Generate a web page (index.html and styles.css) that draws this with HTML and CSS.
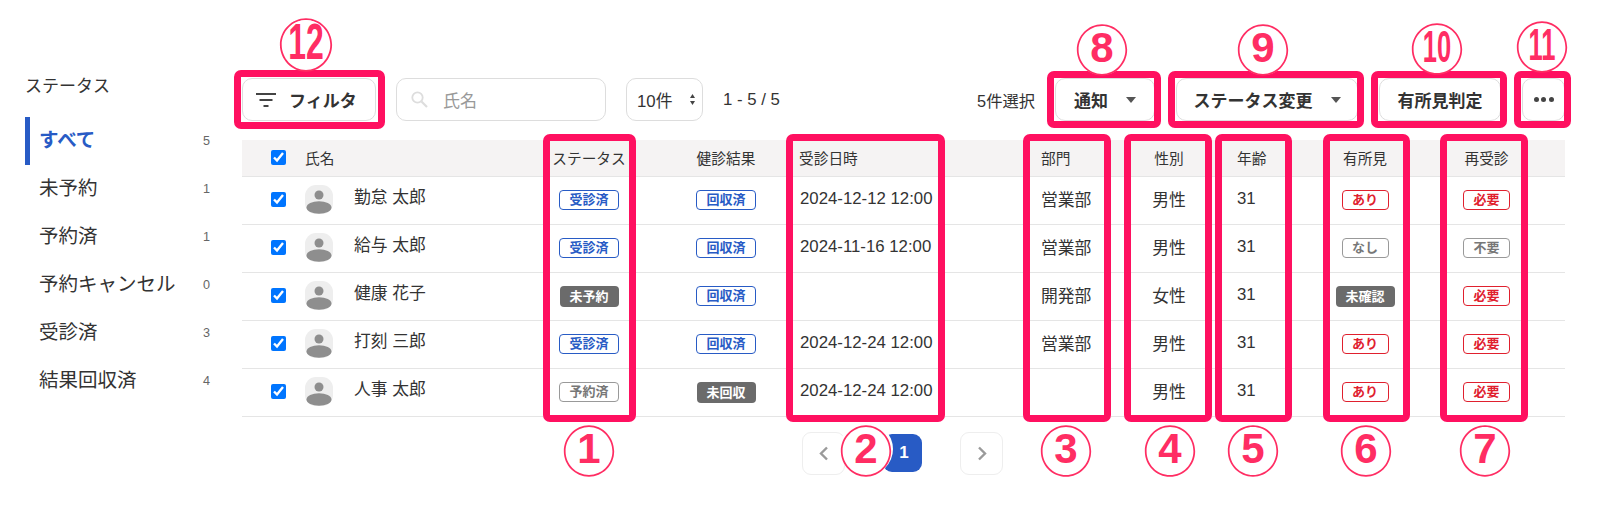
FILE: index.html
```html
<!DOCTYPE html>
<html lang="ja">
<head>
<meta charset="utf-8">
<title>ステータス</title>
<link rel="stylesheet" href="styles.css">
</head>
<body>
<div class="app">
  <aside class="side">
    <h2 class="side-title">ステータス</h2>
    <ul class="side-list">
      <li class="side-item active"><span class="label">すべて</span><span class="num">5</span></li>
      <li class="side-item"><span class="label">未予約</span><span class="num">1</span></li>
      <li class="side-item"><span class="label">予約済</span><span class="num">1</span></li>
      <li class="side-item"><span class="label">予約キャンセル</span><span class="num">0</span></li>
      <li class="side-item"><span class="label">受診済</span><span class="num">3</span></li>
      <li class="side-item"><span class="label">結果回収済</span><span class="num">4</span></li>
    </ul>
  </aside>
  <main class="main">
    <div class="toolbar">
      <button class="btn filter">
        <svg width="20" height="14" viewBox="0 0 20 14"><path d="M0 1h20M3.500 7h13M7.500 13h5" stroke="#444" stroke-width="2" fill="none"/></svg>
        <span>フィルタ</span>
      </button>
      <label class="search">
        <svg width="17" height="17" viewBox="0 0 17 17"><circle cx="6.500" cy="6.500" r="5.200" fill="none" stroke="#ddd" stroke-width="1.800"/><path d="M10.500 10.500L16 16" stroke="#ddd" stroke-width="2.200"/></svg>
        <span>氏名</span>
      </label>
      <div class="select">
        <span>10件</span>
        <svg width="5" height="11" viewBox="0 0 5 11"><path d="M2.500 0L5 4H0zM2.500 11L0 7h5z" fill="#444"/></svg>
      </div>
      <span class="range">1 - 5 / 5</span>
      <span class="selected">5件選択</span>
      <button class="btn act notify"><span>通知</span><i class="caret"></i></button>
      <button class="btn act change"><span>ステータス変更</span><i class="caret"></i></button>
      <button class="btn act judge"><span>有所見判定</span></button>
      <button class="btn act more" aria-label="その他"><i></i><i></i><i></i></button>
    </div>
    <table class="grid">
      <colgroup>
        <col class="c-check"><col class="c-name"><col class="c-status"><col class="c-result"><col class="c-date"><col class="c-dept"><col class="c-gender"><col class="c-age"><col class="c-find"><col class="c-re">
      </colgroup>
      <thead>
        <tr>
          <th class="check"><input type="checkbox" checked></th>
          <th class="name">氏名</th>
          <th class="mid">ステータス</th>
          <th class="mid">健診結果</th>
          <th>受診日時</th>
          <th>部門</th>
          <th class="mid">性別</th>
          <th class="age">年齢</th>
          <th class="mid">有所見</th>
          <th class="mid last">再受診</th>
        </tr>
      </thead>
      <tbody>
        <tr>
          <td class="check"><input type="checkbox" checked></td>
          <td class="name"><div class="person"><svg class="avatar" viewBox="0 0 28 29"><rect width="28" height="29" rx="11" fill="#eee"/><circle cx="14" cy="10" r="4.500" fill="#8e8e8e"/><ellipse cx="14" cy="22.500" rx="12.500" ry="6.200" fill="#8e8e8e"/></svg><span class="who">勤怠 太郎</span></div></td>
          <td class="mid"><span class="tag blue">受診済</span></td>
          <td class="mid"><span class="tag blue">回収済</span></td>
          <td class="txt date">2024-12-12 12:00</td>
          <td class="txt">営業部</td>
          <td class="mid txt">男性</td>
          <td class="age txt">31</td>
          <td class="mid"><span class="tag red short">あり</span></td>
          <td class="mid last"><span class="tag red short">必要</span></td>
        </tr>
        <tr>
          <td class="check"><input type="checkbox" checked></td>
          <td class="name"><div class="person"><svg class="avatar" viewBox="0 0 28 29"><rect width="28" height="29" rx="11" fill="#eee"/><circle cx="14" cy="10" r="4.500" fill="#8e8e8e"/><ellipse cx="14" cy="22.500" rx="12.500" ry="6.200" fill="#8e8e8e"/></svg><span class="who">給与 太郎</span></div></td>
          <td class="mid"><span class="tag blue">受診済</span></td>
          <td class="mid"><span class="tag blue">回収済</span></td>
          <td class="txt date">2024-11-16 12:00</td>
          <td class="txt">営業部</td>
          <td class="mid txt">男性</td>
          <td class="age txt">31</td>
          <td class="mid"><span class="tag gray short">なし</span></td>
          <td class="mid last"><span class="tag gray short">不要</span></td>
        </tr>
        <tr>
          <td class="check"><input type="checkbox" checked></td>
          <td class="name"><div class="person"><svg class="avatar" viewBox="0 0 28 29"><rect width="28" height="29" rx="11" fill="#eee"/><circle cx="14" cy="10" r="4.500" fill="#8e8e8e"/><ellipse cx="14" cy="22.500" rx="12.500" ry="6.200" fill="#8e8e8e"/></svg><span class="who">健康 花子</span></div></td>
          <td class="mid"><span class="tag dark">未予約</span></td>
          <td class="mid"><span class="tag blue">回収済</span></td>
          <td class="txt date"></td>
          <td class="txt">開発部</td>
          <td class="mid txt">女性</td>
          <td class="age txt">31</td>
          <td class="mid"><span class="tag dark">未確認</span></td>
          <td class="mid last"><span class="tag red short">必要</span></td>
        </tr>
        <tr>
          <td class="check"><input type="checkbox" checked></td>
          <td class="name"><div class="person"><svg class="avatar" viewBox="0 0 28 29"><rect width="28" height="29" rx="11" fill="#eee"/><circle cx="14" cy="10" r="4.500" fill="#8e8e8e"/><ellipse cx="14" cy="22.500" rx="12.500" ry="6.200" fill="#8e8e8e"/></svg><span class="who">打刻 三郎</span></div></td>
          <td class="mid"><span class="tag blue">受診済</span></td>
          <td class="mid"><span class="tag blue">回収済</span></td>
          <td class="txt date">2024-12-24 12:00</td>
          <td class="txt">営業部</td>
          <td class="mid txt">男性</td>
          <td class="age txt">31</td>
          <td class="mid"><span class="tag red short">あり</span></td>
          <td class="mid last"><span class="tag red short">必要</span></td>
        </tr>
        <tr>
          <td class="check"><input type="checkbox" checked></td>
          <td class="name"><div class="person"><svg class="avatar" viewBox="0 0 28 29"><rect width="28" height="29" rx="11" fill="#eee"/><circle cx="14" cy="10" r="4.500" fill="#8e8e8e"/><ellipse cx="14" cy="22.500" rx="12.500" ry="6.200" fill="#8e8e8e"/></svg><span class="who">人事 太郎</span></div></td>
          <td class="mid"><span class="tag gray">予約済</span></td>
          <td class="mid"><span class="tag dark">未回収</span></td>
          <td class="txt date">2024-12-24 12:00</td>
          <td class="txt"></td>
          <td class="mid txt">男性</td>
          <td class="age txt">31</td>
          <td class="mid"><span class="tag red short">あり</span></td>
          <td class="mid last"><span class="tag red short">必要</span></td>
        </tr>
      </tbody>
    </table>
    <nav class="pager">
      <button class="page-arrow" aria-label="前へ"><svg width="10" height="15" viewBox="0 0 10 15"><path d="M8 1.500L2 7.500l6 6" fill="none" stroke="#9a9a9a" stroke-width="2.400"/></svg></button>
      <button class="page-current">1</button>
      <button class="page-arrow" aria-label="次へ"><svg width="10" height="15" viewBox="0 0 10 15"><path d="M2 1.500l6 6-6 6" fill="none" stroke="#9a9a9a" stroke-width="2.400"/></svg></button>
    </nav>
  </main>
</div>

<div class="box b1"></div><div class="box b2"></div><div class="box b3"></div><div class="box b4"></div>
<div class="box b5"></div><div class="box b6"></div><div class="box b7"></div><div class="box b8"></div>
<div class="box b9"></div><div class="box b10"></div><div class="box b11"></div><div class="box b12"></div>

<span class="mark m1" data-n="1">①</span><span class="mark m2" data-n="2">②</span><span class="mark m3" data-n="3">③</span><span class="mark m4" data-n="4">④</span>
<span class="mark m5" data-n="5">⑤</span><span class="mark m6" data-n="6">⑥</span><span class="mark m7" data-n="7">⑦</span><span class="mark m8" data-n="8">⑧</span>
<span class="mark m9" data-n="9">⑨</span><span class="mark two m10" data-n="10">⑩</span><span class="mark two m11" data-n="11">⑪</span><span class="mark two m12" data-n="12">⑫</span>
</body>
</html>
```
FILE: styles.css
```css
* { box-sizing: border-box; }
html, body { margin: 0; padding: 0; }
body {
  position: relative;
  width: 1603px;
  height: 510px;
  overflow: hidden;
  background: #fff;
  color: #333;
  font-family: "Liberation Sans", "Noto Sans CJK JP", sans-serif;
  font-size: 16.8px;
}
button { font: inherit; color: inherit; background: #fff; cursor: pointer; }

.app { display: flex; align-items: flex-start; }

.side { width: 242px; flex: none; padding: 75px 32px 0 25px; }
.side-title { margin: 0 0 18px; font-size: 17px; font-weight: 400; line-height: 24px; color: #333; }
.side-list { list-style: none; margin: 0; padding: 0; }
.side-item {
  display: flex;
  align-items: center;
  justify-content: space-between;
  height: 48px;
  padding-left: 14px;
  font-size: 19.500px;
}
.side-item.active { border-left: 5px solid #285bc5; padding-left: 9px; color: #285bc5; font-weight: 700; }
.label { padding-bottom: 6px; }
.num { font-size: 12.600px; font-weight: 400; color: #666; }

.main { width: 1323px; flex: none; padding-top: 78px; }

.toolbar { display: flex; align-items: center; height: 43px; margin-bottom: 19px; }
.btn {
  display: flex;
  align-items: center;
  height: 43px;
  padding: 0;
  border: 1px solid #ddd;
  border-radius: 10px;
  font-size: 17px;
  font-weight: 700;
  color: #333;
}
.filter { width: 134px; padding-left: 13px; gap: 13px; }
.search {
  display: flex;
  align-items: center;
  gap: 15px;
  width: 210px;
  height: 43px;
  margin-left: 20px;
  padding-left: 14px;
  border: 1px solid #ddd;
  border-radius: 10px;
  color: #999;
  font-size: 17px;
}
.select {
  display: flex;
  align-items: center;
  justify-content: space-between;
  width: 77px;
  height: 43px;
  margin-left: 20px;
  padding: 0 7px 0 10px;
  border: 1px solid #ddd;
  border-radius: 10px;
}
.range { margin-left: 20px; }
.selected { margin-left: auto; font-size: 16.300px; }
.act { justify-content: center; }
.notify { width: 100px; margin-left: 20px; gap: 18px; }
.change { width: 182px; margin-left: 21px; gap: 18px; }
.judge { width: 122px; margin-left: 21px; }
.more { width: 43px; margin-left: 21px; gap: 2.500px; }
.more i { width: 5px; height: 5px; border-radius: 50%; background: #444; }
.caret { width: 0; height: 0; border: 5.500px solid transparent; border-top: 6px solid #555; border-bottom: 0; }

.grid { width: 1323px; table-layout: fixed; border-collapse: collapse; }
.c-check { width: 55px; }
.c-name { width: 228px; }
.c-status { width: 128px; }
.c-result { width: 146px; }
.c-date { width: 242px; }
.c-dept { width: 89px; }
.c-gender { width: 78px; }
.c-age { width: 104px; }
.c-find { width: 106px; }
.c-re { width: 147px; }

th, td { padding: 0; text-align: left; border-bottom: 1px solid #e5e5e5; }
th { height: 36px; background: #f5f3f3; font-size: 14.700px; font-weight: 400; color: #333; }
td { height: 48px; }
td.txt { padding-bottom: 2px; }
td.date { padding-left: 1px; }
th.mid, td.mid { text-align: center; }
.last { padding-right: 10px; }
.check { padding-left: 29px; }
td.check { padding-bottom: 1px; }
.check input { display: block; width: 15px; height: 15px; margin: 0; accent-color: #0075ff; }
th.name { padding-left: 8px; }
td.name { padding-left: 8px; }
th.age, td.age { padding-left: 29px; }
.person { display: flex; align-items: center; gap: 21px; padding-bottom: 2px; }
.who { padding-bottom: 6px; }
.avatar { width: 28px; height: 29px; flex: none; }

.tag {
  display: inline-block;
  width: 60px;
  height: 20px;
  line-height: 18px;
  border: 1px solid;
  border-radius: 4px;
  font-size: 13px;
  font-weight: 700;
  text-align: center;
  vertical-align: middle;
}
.tag.short { width: 47px; }
.blue { color: #285bc5; border-color: #285bc5; }
.red { color: #e0202e; border-color: #e0202e; }
.gray { color: #777; border-color: #999; }
.dark { width: 59px; height: 21px; line-height: 21px; background: #6b6b6b; border: 0; color: #fff; }

.pager { display: flex; align-items: center; gap: 38px; margin: 15px 0 0 560px; }
.page-arrow, .page-current { display: flex; align-items: center; justify-content: center; padding: 0; }
.page-arrow { width: 43px; height: 43px; border: 1px solid #eee; border-radius: 9px; }
.page-current { width: 39px; height: 38px; padding-left: 3px; border: 0; border-radius: 9px; background: #285bc5; color: #fff; font-size: 17px; font-weight: 700; }

.box { position: absolute; border: 7px solid #ff1060; border-radius: 7px; }
.b1 { left: 543px; top: 134px; width: 93px; height: 288px; }
.b2 { left: 786px; top: 134px; width: 159px; height: 288px; }
.b3 { left: 1023px; top: 134px; width: 88px; height: 288px; }
.b4 { left: 1124px; top: 134px; width: 88px; height: 288px; }
.b5 { left: 1215px; top: 134px; width: 77px; height: 288px; }
.b6 { left: 1323px; top: 134px; width: 87px; height: 288px; }
.b7 { left: 1440px; top: 134px; width: 88px; height: 288px; }
.b8 { left: 1047px; top: 71px; width: 114px; height: 57px; }
.b9 { left: 1168px; top: 71px; width: 196px; height: 57px; }
.b10 { left: 1371px; top: 71px; width: 136px; height: 57px; }
.b11 { left: 1514px; top: 71px; width: 57px; height: 57px; }
.b12 { left: 234px; top: 70px; width: 151px; height: 59px; }

.mark {
  position: absolute;
  display: flex;
  align-items: center;
  justify-content: center;
  width: 54px;
  height: 54px;
  border-radius: 50%;
  background: #fff;
  color: #ff2d63;
  font-family: "Noto Sans CJK JP", sans-serif;
  font-size: 54px;
  line-height: 54px;
}
.mark::before {
  content: "";
  position: absolute;
  inset: 6px;
  border-radius: 50%;
  background: #fff;
}
.mark::after {
  content: attr(data-n);
  position: absolute;
  inset: 0;
  display: flex;
  align-items: center;
  justify-content: center;
  font-family: "Liberation Sans", sans-serif;
  font-size: 42px;
  font-weight: 700;
  line-height: 42px;
}
.two::after { font-size: 44px; transform: scaleX(0.58); }
.m1 { left: 562px; top: 422px; }
.m2 { left: 839px; top: 422px; }
.m3 { left: 1039px; top: 422px; }
.m4 { left: 1143px; top: 422px; }
.m5 { left: 1226px; top: 422px; }
.m6 { left: 1339px; top: 422px; }
.m7 { left: 1458px; top: 422px; }
.m8 { left: 1075px; top: 21px; }
.m9 { left: 1236px; top: 21px; }
.m10 { left: 1410px; top: 20px; }
.m11 { left: 1515px; top: 18px; }
.m12 { left: 279px; top: 15px; font-size: 56px; }
.m12::before { inset: 5px; }
.m12::after { font-size: 50px; transform: scaleX(0.64); }
```
